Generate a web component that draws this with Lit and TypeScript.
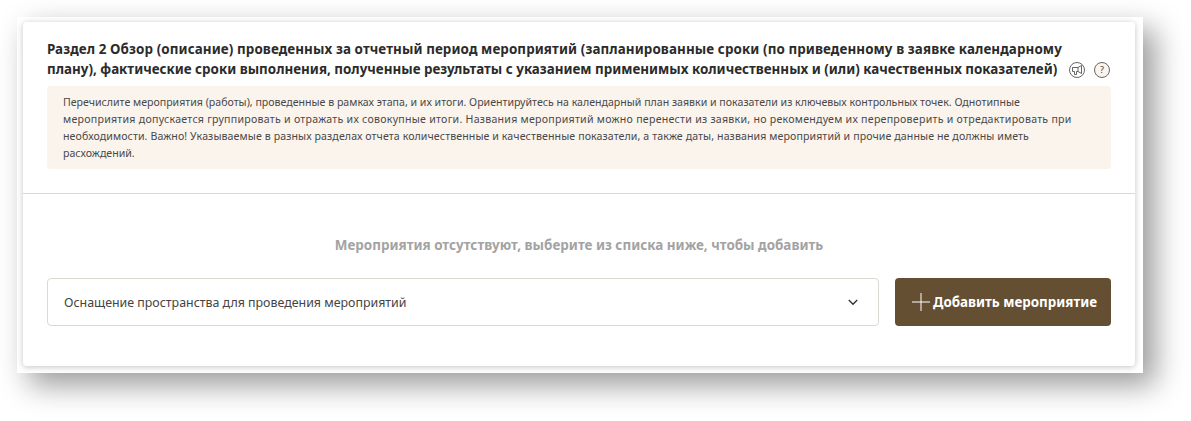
import { LitElement, html, css } from "lit";
import { customElement } from "lit/decorators.js";

@customElement("app-root")
export class AppRoot extends LitElement {
  static styles = css`
    :host { display: block; width: 1191px; height: 421px; background: #fff; overflow: hidden; font-family: "Noto Sans", "Open Sans", sans-serif; }
    .frame { box-sizing: border-box; width: 1126px; height: 356px; margin: 17px 0 0 17px; padding: 5px 8px 7px 6px; background: #fff; box-shadow: 12px 12px 28px rgba(0,0,0,.4); }
    .card { box-sizing: border-box; height: 344px; background: #fff; border-radius: 4px; box-shadow: 0 1px 6px rgba(0,0,0,.24); display: flex; flex-direction: column; }
    .head { box-sizing: border-box; height: 172px; padding: 17px 24px 0; border-bottom: 1px solid #d9d9d9; }
    .title { margin: 0; font-size: 13.4px; line-height: 20px; font-weight: 700; color: #2b2b2b; white-space: nowrap; }
    .first { letter-spacing: .1px; }
    .ico { display: inline-block; vertical-align: -4px; margin-left: 12px; }
    .ico.help { margin-left: 9px; }
    .note { box-sizing: border-box; height: 83px; margin-top: 7px; padding: 8px 8px 8px 16px; background: #fbf4ed; border-radius: 4px; font-size: 10.6px; line-height: 17px; color: #484848; white-space: nowrap; }
    .wide { letter-spacing: .26px; }
    .third { letter-spacing: .1px; }
    .body { flex: 1; padding: 41px 24px 0; }
    .empty { text-align: center; font-size: 13.45px; line-height: 20px; font-weight: 700; color: #a3a3a3; }
    .row { display: flex; gap: 16px; margin-top: 23px; }
    .select { box-sizing: border-box; flex: 1; height: 48px; padding: 0 20px 0 16px; display: flex; align-items: center; justify-content: space-between; border: 1px solid #dcd8d2; border-radius: 4px; font-size: 12.4px; color: #444; }
    .btn { box-sizing: border-box; width: 216px; height: 48px; padding-left: 17px; display: flex; align-items: center; gap: 3px; background: #644f33; border-radius: 4px; color: #fff; font-size: 13.4px; font-weight: 700; white-space: nowrap; }
  `;
  render() {
    return html`<div class="frame"><div class="card">
      <div class="head">
        <h2 class="title"><span class="first">Раздел 2 Обзор (описание) проведенных за отчетный период мероприятий (запланированные сроки (по приведенному в заявке календарному</span><br>плану), фактические сроки выполнения, полученные результаты с указанием применимых количественных и (или) качественных показателей)<svg class="ico" width="16" height="16" viewBox="0 0 16 16" fill="none" stroke="#555" stroke-width=".9"><circle cx="8" cy="8" r="7.5"/><path d="M3.5 5.5h5.5L12.5 3.5v8L9 9.5H7.5v3H5.5v-3H3.5z"/><path d="M9 5.5v4"/></svg><svg class="ico help" width="16" height="16" viewBox="0 0 16 16" fill="none"><circle cx="8" cy="8" r="7.5" fill="#fbf4ed" stroke="#666"/><text x="8" y="11" text-anchor="middle" font-size="9" font-weight="400" font-family="Noto Sans" fill="#444">?</text></svg></h2>
        <div class="note">Перечислите мероприятия (работы), проведенные в рамках этапа, и их итоги. Ориентируйтесь на календарный план заявки и показатели из ключевых контрольных точек. Однотипные<br><span class="wide">мероприятия допускается группировать и отражать их совокупные итоги. Названия мероприятий можно перенести из заявки, но рекомендуем их перепроверить и отредактировать при</span><br><span class="third">необходимости. Важно! Указываемые в разных разделах отчета количественные и качественные показатели, а также даты, названия мероприятий и прочие данные не должны иметь</span><br>расхождений.</div>
      </div>
      <div class="body">
        <div class="empty">Мероприятия отсутствуют, выберите из списка ниже, чтобы добавить</div>
        <div class="row">
          <div class="select"><span>Оснащение пространства для проведения мероприятий</span><svg width="10" height="7" viewBox="0 0 10 7" fill="none" stroke="#333" stroke-width="1.4"><path d="M.8 1 5 5.2 9.2 1"/></svg></div>
          <div class="btn"><svg width="18" height="18" viewBox="0 0 18 18" stroke="#fff" stroke-width="1"><path d="M9 0v18M0 9h18"/></svg>Добавить мероприятие</div>
        </div>
      </div>
    </div></div>`;
  }
}
